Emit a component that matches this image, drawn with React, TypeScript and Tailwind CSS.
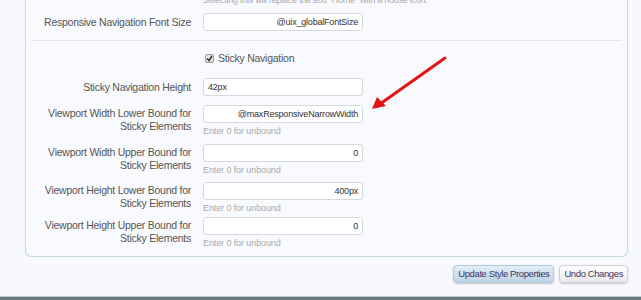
import React from 'react';

interface Field {
  label: string[];
  value: string;
  align: 'left' | 'right';
  hint?: string;
  mb: string;
}

const fields: Field[] = [
  { label: ['Viewport Width Lower Bound for', 'Sticky Elements'], value: '@maxResponsiveNarrowWidth', align: 'right', hint: 'Enter 0 for unbound', mb: 'mb-[7px]' },
  { label: ['Viewport Width Upper Bound for', 'Sticky Elements'], value: '0', align: 'right', hint: 'Enter 0 for unbound', mb: 'mb-[6px]' },
  { label: ['Viewport Height Lower Bound for', 'Sticky Elements'], value: '400px', align: 'right', hint: 'Enter 0 for unbound', mb: 'mb-[3px]' },
  { label: ['Viewport Height Upper Bound for', 'Sticky Elements'], value: '0', align: 'right', hint: 'Enter 0 for unbound', mb: 'mb-0' },
];

function TextBox({ value, align }: { value: string; align: 'left' | 'right' }) {
  return (
    <div
      className={`w-[160px] h-[18px] bg-white border border-[#d6d9dd] rounded-[3px] px-[4px] text-[9px] tracking-[-0.2px] leading-[16px] text-[#333] whitespace-nowrap overflow-hidden ${align === 'right' ? 'text-right' : 'text-left'}`}
    >
      {value}
    </div>
  );
}

export default function App() {
  return (
    <div className="relative w-[641px] h-[300px] overflow-hidden bg-[#f8f9fc] font-['Liberation_Sans',Arial,sans-serif] text-[10.5px] tracking-[-0.25px] text-[#555]">
      {/* Options panel */}
      <div className="flow-root ml-[25px] w-[603px] h-[257px] border-x border-b border-[#c3dadc] rounded-b-[6px] bg-[#f9fafd]">
        <div className="-mt-[5px] h-[10px] pl-[177px] text-[9px] leading-[10px] text-[#aaa] whitespace-nowrap">
          Selecting this will replace the text "Home" with a house icon.
        </div>

        <div className="flex items-center gap-[12px] mt-[8px]">
          <div className="w-[165px] text-right leading-[13px] whitespace-nowrap">Responsive Navigation Font Size</div>
          <TextBox value="@uix_globalFontSize" align="right" />
        </div>

        <div className="mx-[5px] mt-[9px] border-t border-[#e3e6ea]" />

        <div className="flex items-center gap-[4px] ml-[179px] mt-[12px] h-[10px]">
          <div className="w-[9px] h-[9px] rounded-[2px] border border-[#9a9a9a] bg-[#e4e4e4] flex items-center justify-center">
            <svg width="7" height="7" viewBox="0 0 7 7">
              <path d="M1 3.5 L3 5.5 L6 1" stroke="#333" strokeWidth="1.5" fill="none" />
            </svg>
          </div>
          <span className="leading-[13px] whitespace-nowrap">Sticky Navigation</span>
        </div>

        <div className="flex items-center gap-[12px] mt-[15px]">
          <div className="w-[165px] text-right leading-[13px] whitespace-nowrap">Sticky Navigation Height</div>
          <TextBox value="42px" align="left" />
        </div>

        <div className="mt-[9px]">
          {fields.map((f) => (
            <div key={f.label[0]} className={`flex items-start gap-[12px] ${f.mb}`}>
              <div className="w-[165px] text-right leading-[13px] pt-[2px] whitespace-nowrap">
                {f.label[0]}
                <br />
                {f.label[1]}
              </div>
              <div>
                <TextBox value={f.value} align={f.align} />
                <div className="mt-[2px] text-[9px] leading-[12px] tracking-[-0.1px] text-[#aaa] whitespace-nowrap">{f.hint}</div>
              </div>
            </div>
          ))}
        </div>
      </div>

      {/* Form buttons */}
      <div className="flex justify-end gap-[5px] mt-[8px] pr-[13px]">
        <button className="h-[18px] px-[4px] rounded-[4px] bg-gradient-to-b from-[#e3eef8] to-[#bcd4e6] border border-[#b5c9d8] shadow-[0_1px_2px_rgba(0,0,0,0.2)] text-[9.5px] leading-[16px] tracking-[-0.4px] text-[#3a3566] whitespace-nowrap">
          Update Style Properties
        </button>
        <button className="h-[18px] px-[4px] rounded-[4px] bg-gradient-to-b from-[#ffffff] to-[#e8e8ee] border border-[#cfd2d8] shadow-[0_1px_2px_rgba(0,0,0,0.2)] text-[9.5px] leading-[16px] tracking-[-0.4px] text-[#4a3556] whitespace-nowrap">
          Undo Changes
        </button>
      </div>

      {/* Page footer strip */}
      <div className="absolute left-0 right-0 bottom-0 h-[4px] border-t border-[#c2cacc] bg-[#6d7b80]" />

      {/* Annotation arrow */}
      <svg className="absolute left-0 top-0 pointer-events-none" width="641" height="300">
        <line x1="445" y1="58" x2="380" y2="104" stroke="#e11414" strokeWidth="3" strokeLinecap="round" />
        <polygon points="372,109 377,97 386,106" fill="#e11414" />
      </svg>
    </div>
  );
}
